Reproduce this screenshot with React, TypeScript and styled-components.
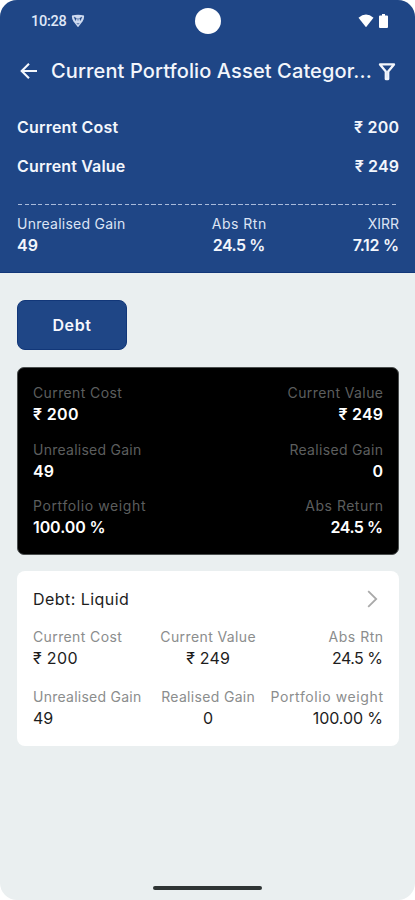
import React from "react";
import styled, { createGlobalStyle } from "styled-components";

const GlobalStyle = createGlobalStyle`
  * { box-sizing: border-box; }
  html, body { margin: 0; background: #fff; }
  body { font-family: Inter, "Noto Sans", sans-serif; }
`;

type Align = "left" | "center" | "right";

const Screen = styled.main`
  width: 415px;
  height: 900px;
  display: flex;
  flex-direction: column;
  overflow: hidden;
  border-radius: 17px;
  background: #eaeff0;
`;

const Header = styled.header`
  height: 273px;
  display: flex;
  flex-direction: column;
  background: #1f4686;
  border-bottom: 1px solid #123779;
  color: #f3f6fc;
`;

const StatusBar = styled.div`
  height: 42px;
  display: grid;
  grid-template-columns: 1fr 26px 1fr;
  align-items: center;
  padding: 0 27px 0 28px;
`;

const StatusGroup = styled.div<{ $end?: boolean }>`
  display: flex;
  align-items: center;
  gap: ${(p) => (p.$end ? 5 : 4)}px;
  padding-left: ${(p) => (p.$end ? 0 : 3)}px;
  justify-content: ${(p) => (p.$end ? "flex-end" : "flex-start")};
`;

const Clock = styled.span`
  font: 500 14.5px/20px Roboto, sans-serif;
  letter-spacing: -0.25px;
  color: #dfe8f8;
  margin-top: 2px;
`;

const Camera = styled.div`
  width: 26px;
  height: 26px;
  border-radius: 50%;
  background: #fff;
`;

const AppBar = styled.div`
  height: 58px;
  display: flex;
  align-items: center;
  padding: 0 19px 0 20px;
`;

const Title = styled.h1`
  flex: 1;
  margin: 0 0 0 13px;
  font-size: 20px;
  line-height: 28px;
  font-weight: 500;
  letter-spacing: 0.12px;
  white-space: nowrap;
`;

const Totals = styled.div`
  padding: 8px 16px 0 17px;
`;

const TotalRow = styled.div`
  height: 39px;
  display: flex;
  align-items: center;
  justify-content: space-between;
`;

const Divider = styled.div`
  height: 1px;
  margin: 18px 18px 9px;
  background: repeating-linear-gradient(90deg, #a9bbdb 0 4.4px, transparent 4.4px 6.67px);
`;

const HeaderStats = styled.div`
  display: flex;
  justify-content: space-between;
  padding: 0 16px 0 17px;
`;

const Stat = styled.div<{ $align: Align }>`
  display: flex;
  flex-direction: column;
  align-items: ${(p) => (p.$align === "left" ? "flex-start" : p.$align === "right" ? "flex-end" : "center")};
`;

const Label = styled.span<{ $color: string; $track: number }>`
  font-size: 14px;
  line-height: 20px;
  height: 21px;
  color: ${(p) => p.$color};
  letter-spacing: ${(p) => p.$track}px;
  margin-right: ${(p) => -p.$track}px;
  white-space: nowrap;
`;

const Value = styled.span<{ $weight: number; $track?: number }>`
  font-size: 16px;
  line-height: 21px;
  font-weight: ${(p) => p.$weight};
  letter-spacing: ${(p) => p.$track ?? 0}px;
  margin-right: ${(p) => -(p.$track ?? 0)}px;
  white-space: nowrap;
`;

const Content = styled.div`
  flex: 1;
  display: flex;
  flex-direction: column;
  align-items: stretch;
  padding: 27px 16px 0 17px;
`;

const CategoryTab = styled.button`
  width: 110px;
  height: 50px;
  align-self: flex-start;
  border: 1px solid #123779;
  border-radius: 8px;
  background: #1f4686;
  color: #f6f8fd;
  font: 600 16px/20px Inter, sans-serif;
  letter-spacing: 0.6px;
  padding: 0;
`;

const SummaryCard = styled.section`
  height: 188px;
  margin-top: 17px;
  padding: 15px 15px 0 15px;
  border: 1px solid #4b4f4f;
  border-radius: 7px;
  background: #000;
  color: #fff;
  display: flex;
  flex-direction: column;
  gap: 14.5px;
`;

const SummaryRow = styled.div`
  display: flex;
  justify-content: space-between;
`;

const DetailCard = styled.section`
  height: 175px;
  margin-top: 16px;
  padding: 18px 16px 0;
  border-radius: 8px;
  background: #fff;
  color: #1d1d1d;
`;

const DetailHead = styled.div`
  height: 20px;
  display: flex;
  align-items: center;
  justify-content: space-between;
  margin-bottom: 18px;
  padding-right: 5px;
`;

const DetailGrid = styled.div`
  display: grid;
  grid-template-columns: 113px 1fr 113px;
  row-gap: 18px;
`;

const HomeIndicator = styled.div`
  width: 109px;
  height: 4px;
  margin: auto auto 10px 136px;
  border-radius: 2px;
  background: #2f3434;
`;

interface FieldProps {
  label: string;
  value: string;
  align: Align;
  color: string;
  weight: number;
}

const labelTracking: Record<string, number> = {
  "Current Cost": 0.38,
  "Current Value": 0.4,
  "Unrealised Gain": 0.25,
  "Realised Gain": 0.32,
  "Portfolio weight": 0.6,
  "Abs Return": 0.5,
  "Abs Rtn": 0.5,
};

const valueTracking: Record<string, number> = {
  "₹ 200": 0.35,
  "₹ 249": 0.2,
  "24.5 %": -0.5,
  "7.12 %": -0.3,
  "100.00 %": -0.1,
};

const Field = ({ label, value, align, color, weight }: FieldProps) => (
  <Stat $align={align}>
    <Label $color={color} $track={labelTracking[label] ?? 0}>{label}</Label>
    <Value $weight={weight} $track={valueTracking[value]}>{value}</Value>
  </Stat>
);

const ShieldIcon = () => (
  <svg width="14" height="14" viewBox="0 0 14 14">
    <path d="M1 1.6Q7-.3 13 1.6Q13.4 5 11.5 7.5L7 13.3L2.5 7.5Q.6 5 1 1.6Z" fill="#cedaf0" />
    <path d="M3 3L5.4 4.2L4.6 6.6ZM11 3L8.6 4.2L9.4 6.6Z" fill="#1f4686" stroke="#1f4686" strokeWidth=".4" />
    <path d="M5.8 9L7 10.3L8.2 9M7 4V6.5" fill="none" stroke="#1f4686" strokeWidth=".7" />
  </svg>
);

const WifiIcon = () => (
  <svg width="16" height="14" viewBox="0 0 16 14">
    <path d="M.5 3.8Q8-2.7 15.5 3.8L8 13.2Z" fill="#fff" />
  </svg>
);

const BatteryIcon = () => (
  <svg width="9" height="14" viewBox="0 0 9 14">
    <path d="M3 0H6V1.5H8Q9 1.5 9 2.5V13Q9 14 8 14H1Q0 14 0 13V2.5Q0 1.5 1 1.5H3Z" fill="#fff" />
  </svg>
);

const BackIcon = () => (
  <svg width="18" height="18" viewBox="0 0 18 18" fill="none" stroke="#f3f6fc" strokeWidth="2.1">
    <path d="M17 9H2.3M9 1.7L1.7 9L9 16.3" />
  </svg>
);

const FilterIcon = () => (
  <svg width="18" height="19" viewBox="0 0 18 19" fill="none" stroke="#f3f6fc" strokeWidth="2.3">
    <path d="M2 2.4H16L10.2 9.5V17H7.8V9.5Z" strokeLinejoin="round" />
  </svg>
);

const ChevronIcon = () => (
  <svg width="11" height="18" viewBox="0 0 11 18" fill="none" stroke="#a9a9a9" strokeWidth="1.8">
    <path d="M1.2 1.2L9.2 9L1.2 16.8" />
  </svg>
);

export default function App() {
  const pale = "#dce4f4";
  const dim = "#5c5e5e";
  const gray = "#8b8d8d";
  return (
    <>
      <GlobalStyle />
      <Screen>
        <Header>
          <StatusBar>
            <StatusGroup><Clock>10:28</Clock><ShieldIcon /></StatusGroup>
            <Camera />
            <StatusGroup $end><WifiIcon /><BatteryIcon /></StatusGroup>
          </StatusBar>
          <AppBar>
            <BackIcon />
            <Title>Current Portfolio Asset Categor...</Title>
            <FilterIcon />
          </AppBar>
          <Totals>
            <TotalRow><Value $weight={600} $track={0.2}>Current Cost</Value><Value $weight={600} $track={0.25}>₹ 200</Value></TotalRow>
            <TotalRow><Value $weight={600} $track={0.15}>Current Value</Value><Value $weight={600} $track={0.15}>₹ 249</Value></TotalRow>
          </Totals>
          <Divider />
          <HeaderStats>
            <Field label="Unrealised Gain" value="49" align="left" color={pale} weight={600} />
            <Field label="Abs Rtn" value="24.5 %" align="center" color={pale} weight={600} />
            <Field label="XIRR" value="7.12 %" align="right" color={pale} weight={600} />
          </HeaderStats>
        </Header>
        <Content>
          <CategoryTab>Debt</CategoryTab>
          <SummaryCard>
            <SummaryRow>
              <Field label="Current Cost" value="₹ 200" align="left" color={dim} weight={600} />
              <Field label="Current Value" value="₹ 249" align="right" color={dim} weight={600} />
            </SummaryRow>
            <SummaryRow>
              <Field label="Unrealised Gain" value="49" align="left" color={dim} weight={600} />
              <Field label="Realised Gain" value="0" align="right" color={dim} weight={600} />
            </SummaryRow>
            <SummaryRow>
              <Field label="Portfolio weight" value="100.00 %" align="left" color={dim} weight={600} />
              <Field label="Abs Return" value="24.5 %" align="right" color={dim} weight={600} />
            </SummaryRow>
          </SummaryCard>
          <DetailCard>
            <DetailHead><Value $weight={400} $track={0.45}>Debt: Liquid</Value><ChevronIcon /></DetailHead>
            <DetailGrid>
              <Field label="Current Cost" value="₹ 200" align="left" color={gray} weight={400} />
              <Field label="Current Value" value="₹ 249" align="center" color={gray} weight={400} />
              <Field label="Abs Rtn" value="24.5 %" align="right" color={gray} weight={400} />
              <Field label="Unrealised Gain" value="49" align="left" color={gray} weight={400} />
              <Field label="Realised Gain" value="0" align="center" color={gray} weight={400} />
              <Field label="Portfolio weight" value="100.00 %" align="right" color={gray} weight={400} />
            </DetailGrid>
          </DetailCard>
          <HomeIndicator />
        </Content>
      </Screen>
    </>
  );
}
